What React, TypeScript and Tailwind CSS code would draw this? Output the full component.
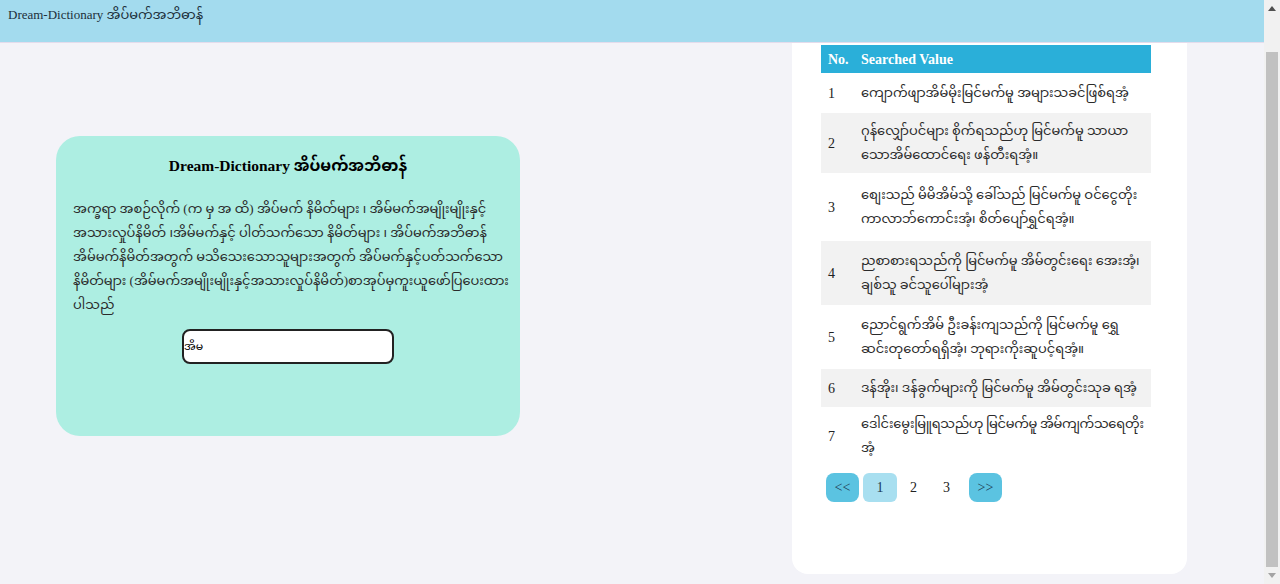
import { useEffect, useRef } from "react";

const rows = [
  { no: 1, text: "ကျောက်ဖျာအိမ်မိုးမြင်မက်မူ အများသခင်ဖြစ်ရအံ့", h: "h-[40px]", bg: "bg-white", tr: "" },
  { no: 2, text: "ဂုန်လျှော်ပင်များ စိုက်ရသည်ဟု မြင်မက်မူ သာယာသောအိမ်ထောင်ရေး ဖန်တီးရအံ့။", h: "h-[60px]", bg: "bg-[#f2f2f2]", tr: "" },
  { no: 3, text: "စျေးသည် မိမိအိမ်သို့ ခေါ်သည် မြင်မက်မူ ဝင်ငွေတိုးကာလာဘ်ကောင်းအံ့၊ စိတ်ပျော်ရွှင်ရအံ့။", h: "h-[68px]", bg: "bg-white", tr: "" },
  { no: 4, text: "ညစာစားရသည်ကို မြင်မက်မူ အိမ်တွင်းရေး အေးအံ့၊ ချစ်သူ ခင်သူပေါ်များအံ့", h: "h-[64px]", bg: "bg-[#f2f2f2]", tr: "" },
  { no: 5, text: "ညောင်ရွက်အိမ် ဦးခန်းကျသည်ကို မြင်မက်မူ ရွှေဆင်းတုတော်ရရှိအံ့၊ ဘုရားကိုးဆူပင့်ရအံ့။", h: "h-[64px]", bg: "bg-white", tr: "" },
  { no: 6, text: "ဒန်အိုး၊ ဒန်ခွက်များကို မြင်မက်မူ အိမ်တွင်းသုခ ရအံ့", h: "h-[38px]", bg: "bg-[#f2f2f2]", tr: "" },
  { no: 7, text: "ဒေါင်းမွေးမြူရသည်ဟု မြင်မက်မူ အိမ်ကျက်သရေတိုး\u200Bအံ့", h: "h-[58px]", bg: "bg-white", tr: "tracking-[-0.3px]" },
];

const intro =
  "အက္ခရာ အစဉ်လိုက် (က မှ အ ထိ) အိပ်မက် နိမိတ်များ ၊ အိမ်မက်အမျိုးမျိုးနှင့် အသားလှုပ်နိမိတ် ၊အိမ်မက်နှင့် ပါတ်သက်သော နိမိတ်များ ၊ အိပ်မက်အဘိဓာန် အိမ်မက်နိမိတ်အတွက် မသိသေးသောသူများအတွက် အိပ်မက်နှင့်ပတ်သက်သော နိမိတ်များ (အိမ်မက်အမျိုးမျိုးနှင့်အသားလှုပ်နိမိတ်)စာအုပ်မှကူးယူဖော်ပြပေးထား\u200Bပါသည်";

const serif = "font-['Liberation_Serif','Noto_Sans_Myanmar','Padauk','Myanmar_Text',serif]";

function FakeScrollbar() {
  return (
    <div className="w-[16px] h-screen bg-[#f1f1f1] flex flex-col items-stretch shrink-0">
      <div className="h-[17px] flex items-center justify-center">
        <svg width="8" height="5" viewBox="0 0 8 5">
          <path d="M0 5 L4 0 L8 5 Z" fill="#505050" />
        </svg>
      </div>
      <div className="h-[35px]" />
      <div className="flex-1 mx-[2px] bg-[#c1c1c1]" />
      <div className="h-[17px] flex items-center justify-center">
        <svg width="8" height="5" viewBox="0 0 8 5">
          <path d="M0 0 L8 0 L4 5 Z" fill="#a3a3a3" />
        </svg>
      </div>
    </div>
  );
}

export default function App() {
  const scroller = useRef<HTMLDivElement>(null);

  useEffect(() => {
    if (scroller.current) scroller.current.scrollTop = 36;
  }, []);

  return (
    <div className="flex h-screen">
      <div
        ref={scroller}
        className={`flex-1 h-screen overflow-y-scroll [scrollbar-width:none] bg-[#f3f3f8] text-[#222] ${serif}`}
      >
        {/* Header */}
        <header className="sticky top-0 z-10 h-[43px] bg-[#a3dbee] border-b border-[#e4dcec] flex items-center pl-2">
          <span className="text-[13px] text-[#1c2f3a] -mt-[12px]">Dream-Dictionary အိပ်မက်အဘိဓာန်</span>
        </header>

        <div className="flex items-start pl-14 pr-[77px] pb-[11px]">
          {/* Left card */}
          <div className="w-[464px] h-[300px] mt-[129px] bg-[#adeee2] rounded-[24px] pl-[17px] pr-[8px] pt-[18px]">
            <h1 className="text-center text-[15.5px] font-bold text-black pr-[9px]">Dream-Dictionary အိပ်မက်အဘိဓာန်</h1>
            <p className="mt-[20px] text-[13px] leading-[24px] text-[#2a2a2a]">{intro}</p>
            <div className="flex justify-center mt-[12px] pr-[9px]">
              <input
                defaultValue="အိမ"
                className="w-[212px] h-[35px] bg-white border-2 border-[#222] rounded-[8px] text-[11px] text-black outline-none px-0"
              />
            </div>
          </div>

          <div className="flex-1" />

          {/* Right panel */}
          <div className="w-[395px] h-[559px] mt-2 bg-white rounded-2xl pt-[30px] px-[29px]">
            <table className="w-[330px] border-collapse text-[13px]">
              <thead>
                <tr className="bg-[#2aafd9] text-white h-[28px] text-[14px]">
                  <th className="w-[40px] text-left pl-[7px] font-bold">No.</th>
                  <th className="text-left font-bold">Searched Value</th>
                </tr>
              </thead>
              <tbody>
                {rows.map((r) => (
                  <tr key={r.no} className={`${r.bg} ${r.h}`}>
                    <td className="pl-[7px] align-middle text-[#222] text-[14px]">{r.no}</td>
                    <td className={`align-middle leading-[24px] pr-[1px] text-[#2a2a2a] ${r.tr}`}>{r.text}</td>
                  </tr>
                ))}
              </tbody>
            </table>

            <div className="flex items-center mt-[8px] pl-[5px] text-[14px]">
              <button className="w-[33px] h-[29px] rounded-[8px] bg-[#5bc3e1] text-[#1e3a52]">&lt;&lt;</button>
              <button className="w-[34px] h-[29px] rounded-[6px] bg-[#a8dff0] text-[#1e3a52] ml-[4px]">1</button>
              <button className="w-[33px] h-[29px] text-[#222]">2</button>
              <button className="w-[33px] h-[29px] text-[#222]">3</button>
              <button className="w-[33px] h-[29px] rounded-[8px] bg-[#5bc3e1] text-[#1e3a52] ml-[6px]">&gt;&gt;</button>
            </div>
          </div>
        </div>
      </div>
      <FakeScrollbar />
    </div>
  );
}
